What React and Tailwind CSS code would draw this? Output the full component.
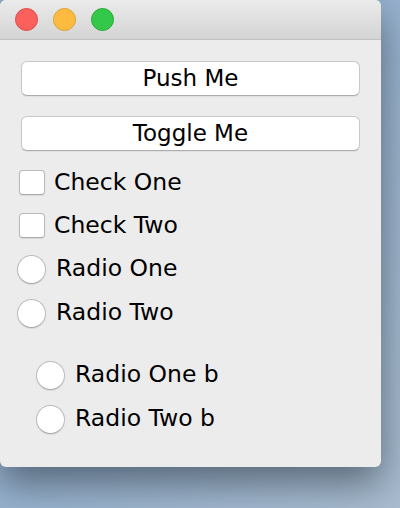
export default function App() {
  const font = { fontFamily: "'DejaVu Sans', 'Liberation Sans', sans-serif" }

  const Check = ({ label }) => (
    <div className="h-[43px] flex items-center">
      <span className="ml-[2px] w-[26px] h-[25px] bg-white border border-[#b9b9b9] border-b-[#a9a9a9] rounded-[4px] shadow-[0_1px_1px_rgba(0,0,0,0.08)]" />
      <span className="ml-[9px] text-[23.5px] text-black">{label}</span>
    </div>
  )

  const Radio = ({ label, indent }) => (
    <div className={"h-[44px] flex items-center " + (indent ? "pl-[19px]" : "")}>
      <span className="w-[29px] h-[29px] rounded-full bg-white border border-[#bcbcbc] border-b-[#a9a9a9] shadow-[0_1px_1px_rgba(0,0,0,0.08)]" />
      <span className="ml-[10px] text-[23.5px] text-black">{label}</span>
    </div>
  )

  return (
    <div className="w-[400px] h-[508px] overflow-hidden bg-gradient-to-br from-[#8ea9c6] via-[#97b2cf] to-[#aabdd0]" style={font}>
      <div className="w-[381px] h-[467px] bg-[#ececec] rounded-[6px] overflow-hidden shadow-[0_16px_38px_rgba(40,50,60,0.6)] flex flex-col">

        {/* Title bar */}
        <div className="h-[40px] shrink-0 bg-gradient-to-b from-[#ebebeb] to-[#d4d4d4] border-b border-[#c2c2c2] flex items-center pl-[15px] gap-[15px]">
          <span className="w-[23px] h-[23px] rounded-full bg-[#fc605c] border border-[#de4a48]" />
          <span className="w-[23px] h-[23px] rounded-full bg-[#fdbc40] border border-[#de9f34]" />
          <span className="w-[23px] h-[23px] rounded-full bg-[#34c84a] border border-[#27aa35]" />
        </div>

        {/* Buttons */}
        <div className="pl-[21px] pt-[21px] flex flex-col gap-[20px]">
          <button className="w-[339px] h-[35px] bg-white border border-[#c8c8c8] border-b-[#adadad] rounded-[6px] text-[23px] text-black leading-none shadow-[0_1px_1px_rgba(0,0,0,0.06)]">
            Push Me
          </button>
          <button className="w-[339px] h-[35px] bg-white border border-[#c8c8c8] border-b-[#adadad] rounded-[6px] text-[23px] text-black leading-none shadow-[0_1px_1px_rgba(0,0,0,0.06)]">
            Toggle Me
          </button>
        </div>

        {/* Options */}
        <div className="pl-[17px] pt-[10px] flex flex-col">
          <Check label="Check One" />
          <Check label="Check Two" />
          <Radio label="Radio One" />
          <Radio label="Radio Two" />
          <div className="h-[18px]" />
          <Radio label="Radio One b" indent />
          <Radio label="Radio Two b" indent />
        </div>
      </div>
    </div>
  )
}
